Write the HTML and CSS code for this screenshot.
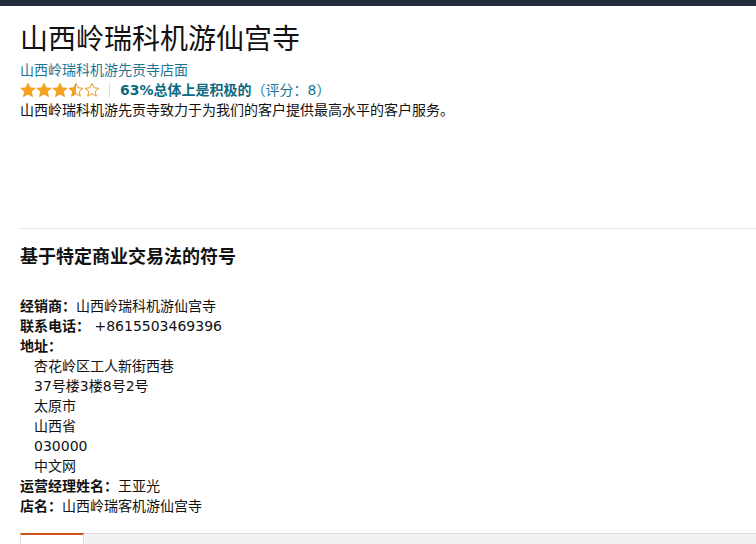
FILE: index.html
```html
<!DOCTYPE html>
<html lang="zh-CN">
<head>
    <meta charset="UTF-8">
    <meta name="viewport" content="width=device-width, initial-scale=1.0">
    <title>山西岭瑞科机游仙宫寺</title>
    <link rel="stylesheet" href="styles.css">
</head>
<body>

    <div class="top-bar"></div>

    <div class="page">
        <h1>山西岭瑞科机游仙宫寺</h1>
        <a class="store-link" href="#">山西岭瑞科机游先贡寺店面</a>
        <div class="rating-row">
            <span class="stars">
                <svg width="16" height="16" viewBox="0 0 16 16"><polygon class="star-full" points="8,1 10.1,5.8 15.3,6.2 11.4,9.6 12.6,14.7 8,12 3.4,14.7 4.6,9.6 0.7,6.2 5.9,5.8"/></svg>
                <svg width="16" height="16" viewBox="0 0 16 16"><polygon class="star-full" points="8,1 10.1,5.8 15.3,6.2 11.4,9.6 12.6,14.7 8,12 3.4,14.7 4.6,9.6 0.7,6.2 5.9,5.8"/></svg>
                <svg width="16" height="16" viewBox="0 0 16 16"><polygon class="star-full" points="8,1 10.1,5.8 15.3,6.2 11.4,9.6 12.6,14.7 8,12 3.4,14.7 4.6,9.6 0.7,6.2 5.9,5.8"/></svg>
                <svg width="16" height="16" viewBox="0 0 16 16">
                    <defs>
                        <linearGradient id="half">
                            <stop offset="50%" stop-color="#f7a21b"/>
                            <stop offset="50%" stop-color="#fff"/>
                        </linearGradient>
                    </defs>
                    <polygon class="star-half" points="8,1.5 10.1,5.8 14.8,6.3 11.2,9.5 12.3,14.2 8,11.7 3.7,14.2 4.8,9.5 1.2,6.3 5.9,5.8"/>
                </svg>
                <svg width="16" height="16" viewBox="0 0 16 16"><polygon class="star-empty" points="8,1.5 10.1,5.8 14.8,6.3 11.2,9.5 12.3,14.2 8,11.7 3.7,14.2 4.8,9.5 1.2,6.3 5.9,5.8"/></svg>
            </span>
            <span class="divider"></span>
            <a class="rating-link" href="#"><b>63%总体上是积极的</b>（评分：8）</a>
        </div>
        <p class="about">山西岭瑞科机游先贡寺致力于为我们的客户提供最高水平的客户服务。</p>

        <hr class="rule">

        <h2>基于特定商业交易法的符号</h2>

        <div class="info">
            <div><b>经销商：</b>山西岭瑞科机游仙宫寺</div>
            <div><b>联系电话：</b> +8615503469396</div>
            <div><b>地址：</b></div>
            <div class="address">
                <div>杏花岭区工人新街西巷</div>
                <div>37号楼3楼8号2号</div>
                <div>太原市</div>
                <div>山西省</div>
                <div>030000</div>
                <div>中文网</div>
            </div>
            <div><b>运营经理姓名：</b>王亚光</div>
            <div><b>店名：</b>山西岭瑞客机游仙宫寺</div>
        </div>

        <div class="tabs">
            <div class="tab active"></div>
        </div>
    </div>

</body>
</html>
```

FILE: styles.css
```css
body {
    margin: 0;
    font-family: "DejaVu Sans", "Noto Sans CJK SC", sans-serif;
    font-size: 14px;
    line-height: 20px;
    color: #111;
    background-color: white;
    overflow: hidden;
}
.top-bar {
    height: 6px;
    background-color: #232f3e;
}
.page {
    padding-left: 20px;
}
h1 {
    font-family: "Noto Sans CJK SC", sans-serif;
    font-size: 28px;
    font-weight: normal;
    line-height: 32px;
    margin: 15px 0 7px;
}
.store-link {
    display: block;
    color: #1b7594;
    text-decoration: none;
}
.rating-row {
    display: flex;
    align-items: center;
    height: 20px;
}
.stars {
    display: flex;
}
.stars svg {
    display: block;
}
.star-full {
    fill: #f7a21b;
    stroke: #f0921a;
    stroke-width: 0.6;
}
.star-half {
    fill: url(#half);
    stroke: #f0921a;
    stroke-width: 1;
}
.star-empty {
    fill: white;
    stroke: #f0921a;
    stroke-width: 1;
}
.divider {
    width: 1px;
    height: 14px;
    background-color: #ddd;
    margin: 0 10px 0 9px;
}
.rating-link {
    color: #1b7594;
    text-decoration: none;
}
.rating-link b {
    color: #0e6a82;
}
.about {
    margin: 0;
}
.rule {
    border: none;
    border-top: 1px solid #e7e7e7;
    margin: 108px 0 0;
}
h2 {
    font-family: "Noto Sans CJK SC", sans-serif;
    font-size: 18px;
    font-weight: bold;
    line-height: 24px;
    margin: 14px 0 29px;
}
.info b {
    font-weight: bold;
}
.address {
    padding-left: 14px;
}
.tabs {
    margin-top: 17px;
    height: 20px;
    border-top: 1px solid #ddd;
    background-color: #f1f1f1;
    display: flex;
}
.tab {
    width: 62px;
    background-color: white;
    border-left: 1px solid #ddd;
    border-right: 1px solid #ddd;
}
.tab.active {
    border-top: 2px solid #d0541b;
    margin-top: -1px;
}
```
